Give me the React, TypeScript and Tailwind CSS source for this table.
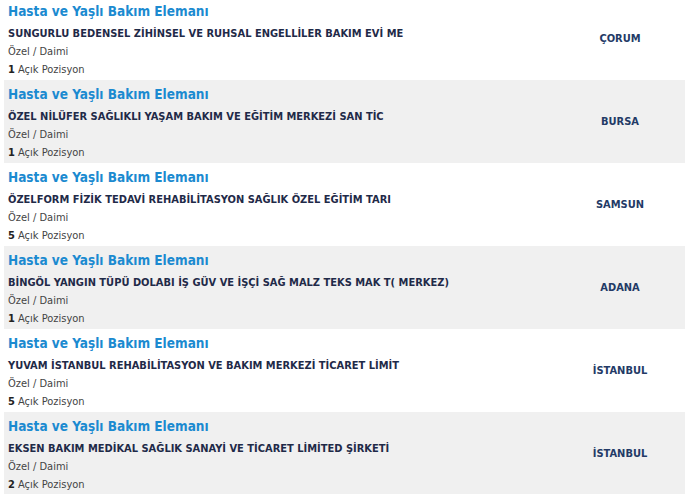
const jobs = [
  { company: 'SUNGURLU BEDENSEL ZİHİNSEL VE RUHSAL ENGELLİLER BAKIM EVİ ME', count: 1, city: 'ÇORUM' },
  { company: 'ÖZEL NİLÜFER SAĞLIKLI YAŞAM BAKIM VE EĞİTİM MERKEZİ SAN TİC', count: 1, city: 'BURSA' },
  { company: 'ÖZELFORM FİZİK TEDAVİ REHABİLİTASYON SAĞLIK ÖZEL EĞİTİM TARI', count: 5, city: 'SAMSUN' },
  { company: 'BİNGÖL YANGIN TÜPÜ DOLABI İŞ GÜV VE İŞÇİ SAĞ MALZ TEKS MAK T( MERKEZ)', count: 1, city: 'ADANA' },
  { company: 'YUVAM İSTANBUL REHABİLİTASYON VE BAKIM MERKEZİ TİCARET LİMİT', count: 5, city: 'İSTANBUL' },
  { company: 'EKSEN BAKIM MEDİKAL SAĞLIK SANAYİ VE TİCARET LİMİTED ŞİRKETİ', count: 2, city: 'İSTANBUL' },
]

export default function App() {
  return (
    <div className="min-h-screen bg-white pl-[4px] font-['DejaVu_Sans_Condensed','DejaVu_Sans',sans-serif] font-stretch-condensed">
      <div className="-mt-[3px]">
        {jobs.map((job, i) => (
          <div
            key={i}
            className={`flex h-[83px] items-stretch ${i % 2 === 1 ? 'bg-[#f0f0f0]' : 'bg-white'}`}
          >
            <div className="flex-1 pl-[4px] pt-[4px]">
              <a href="#" className="block text-[13.5px] font-bold leading-[20px] text-[#1b8ad0]">
                Hasta ve Yaşlı Bakım Elemanı
              </a>
              <div className="mt-[4px] text-[11px] font-bold leading-[17px] text-[#1f2a48]">
                {job.company}
              </div>
              <div className="mt-[1px] text-[11px] leading-[18px] text-[#444]">Özel / Daimi</div>
              <div className="text-[11px] leading-[18px] text-[#444]">
                <span className="font-bold text-[#222]">{job.count}</span> Açık Pozisyon
              </div>
            </div>
            <div className="flex w-[130px] items-center justify-center pt-[2px] text-[11px] font-bold text-[#233a66]">
              {job.city}
            </div>
          </div>
        ))}
      </div>
    </div>
  )
}
